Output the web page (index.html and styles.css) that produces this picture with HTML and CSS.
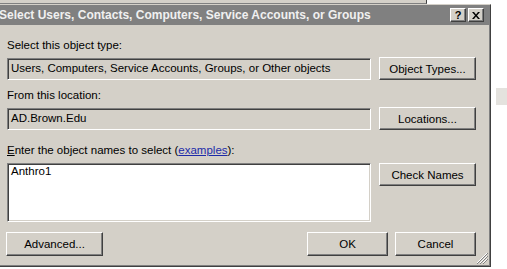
FILE: index.html
```html
<!DOCTYPE html>
<html lang="en">
<head>
  <meta charset="UTF-8" />
  <title>Select Users, Contacts, Computers, Service Accounts, or Groups</title>
  <link rel="stylesheet" href="styles.css">
</head>
<body>
  <div class="back-window"></div>
  <div class="desk">
    <div class="dialog">
      <div class="titlebar">
        <span class="title">Select Users, Contacts, Computers, Service Accounts, or Groups</span>
        <div class="caption-btns">
          <div class="cap-btn">?</div>
          <div class="cap-btn">
            <svg width="8" height="7" viewBox="0 0 8 7">
              <path d="M0 0h2l2 2.5L6 0h2L5 3.5L8 7H6L4 4.5L2 7H0l3-3.5z" fill="#000"/>
            </svg>
          </div>
        </div>
      </div>
      <div class="dlg-body">
        <div class="label">Select this object type:</div>
        <div class="row">
          <div class="field disabled">Users, Computers, Service Accounts, Groups, or Other objects</div>
          <div class="btn">Object Types...</div>
        </div>

        <div class="label">From this location:</div>
        <div class="row">
          <div class="field disabled">AD.Brown.Edu</div>
          <div class="btn">Locations...</div>
        </div>

        <div class="label third"><u>E</u>nter the object names to select (<a class="link" href="#">examples</a>):</div>
        <div class="row top">
          <div class="field names">Anthro1</div>
          <div class="btn">Check Names</div>
        </div>

        <div class="footer">
          <div class="btn wide">Advanced...</div>
          <div class="footer-right">
            <div class="btn ok">OK</div>
            <div class="btn ok">Cancel</div>
          </div>
        </div>
      </div>
      <svg class="grip" width="12" height="12" viewBox="0 0 12 12">
        <path d="M11 1L1 11M11 4L4 11M11 7L7 11" stroke="#fff" stroke-width="1"/>
        <path d="M12 1L1 12M12 4L4 12M12 7L7 12" stroke="#808080" stroke-width="1"/>
      </svg>
    </div>
    <div class="side-tab"></div>
  </div>
</body>
</html>
```

FILE: styles.css
```css
* {
  box-sizing: border-box;
}
body {
  margin: 0;
  background: #fff;
  font-family: 'Liberation Sans', Arial, sans-serif;
  font-size: 11.5px;
  color: #000;
  overflow: hidden;
  width: 507px;
  height: 269px;
}
.back-window {
  width: 427px;
  height: 4px;
  background: #d4d0c8;
  border-right: 1px solid #404040;
  border-bottom: 1px solid #808080;
}
.desk {
  display: flex;
  align-items: flex-start;
}
.dialog {
  position: relative;
  margin-left: -4px;
  width: 496px;
  height: 263px;
  background: #d4d0c8;
  border-top: 1px solid #d4d0c8;
  border-left: 1px solid #d4d0c8;
  border-right: 1px solid #404040;
  border-bottom: 1px solid #404040;
  box-shadow: inset -1px -1px #808080;
  padding-right: 1px;
}
.titlebar {
  height: 20px;
  background: #808080;
  display: flex;
  align-items: center;
  justify-content: space-between;
  padding: 0 5px 0 2px;
}
.title {
  color: #f0f0f0;
  font-weight: bold;
  font-size: 12px;
  white-space: nowrap;
}
.caption-btns {
  display: flex;
  gap: 2px;
}
.cap-btn {
  width: 16px;
  height: 14px;
  background: #d4d0c8;
  border: 1px solid;
  border-color: #fff #404040 #404040 #fff;
  box-shadow: inset -1px -1px #808080;
  display: flex;
  align-items: center;
  justify-content: center;
  font-weight: bold;
  font-size: 11px;
  line-height: 1;
}
.dlg-body {
  padding: 14px 13px 0 10px;
}
.label {
  height: 13px;
  line-height: 13px;
  margin-bottom: 5px;
}
.label + .row {
  margin-bottom: 9px;
}
.label.third {
  margin-top: 14px;
  margin-bottom: 6px;
}
.row {
  display: flex;
  align-items: center;
  gap: 8px;
}
.row.top {
  align-items: flex-start;
}
.field {
  width: 364px;
  height: 22px;
  border: 1px solid;
  border-color: #808080 #fff #fff #808080;
  box-shadow: inset 1px 1px #404040, inset -1px -1px #d4d0c8;
  padding: 3px 0 0 3px;
  white-space: nowrap;
  overflow: hidden;
}
.field.disabled {
  background: #d4d0c8;
}
.field.names {
  height: 59px;
  background: #fff;
  padding-top: 1px;
}
.btn {
  width: 97px;
  height: 23px;
  background: #d4d0c8;
  border: 1px solid;
  border-color: #fff #404040 #404040 #fff;
  box-shadow: inset -1px -1px #808080;
  display: flex;
  align-items: center;
  justify-content: center;
  white-space: nowrap;
}
.link {
  color: #1c2aa8;
}
.footer {
  display: flex;
  justify-content: space-between;
  margin-top: 10px;
  margin-left: -1px;
}
.btn.wide {
  width: 97px;
  height: 24px;
}
.footer-right {
  display: flex;
  gap: 7px;
}
.btn.ok {
  width: 81px;
  height: 24px;
}
.grip {
  position: absolute;
  right: 2px;
  bottom: 2px;
}
.side-tab {
  margin-left: 5px;
  margin-top: 84px;
  width: 12px;
  height: 17px;
  background: #e4e2de;
}
```
